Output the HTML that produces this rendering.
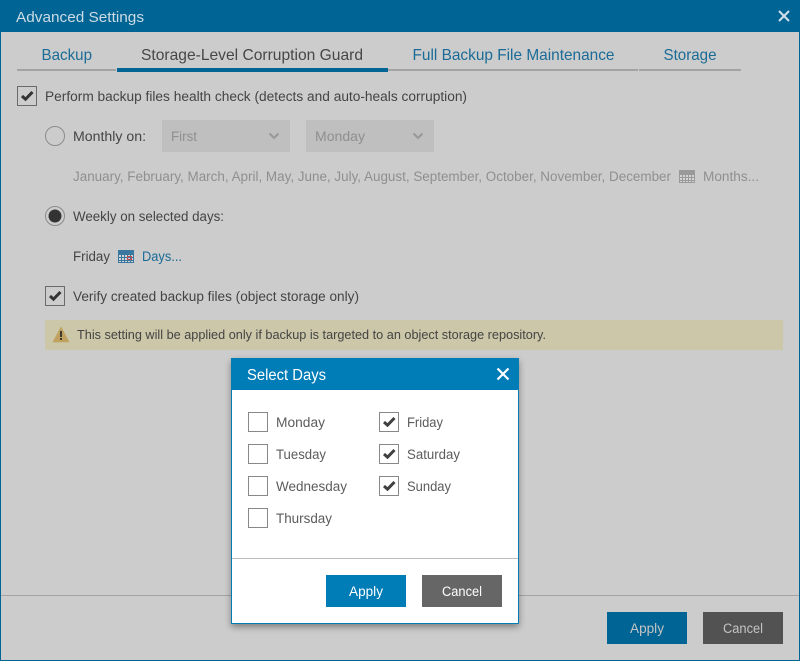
<!DOCTYPE html>
<html><head><meta charset="utf-8"><style>
html,body{margin:0;padding:0;width:800px;height:661px;overflow:hidden;background:#ccc}
svg{display:block;position:absolute;left:0;top:0}
text{font-family:"Liberation Sans",Arial,sans-serif;font-size:13.5px;fill:#444}
.tab{font-size:16px;fill:#1a6b97}
.dim{fill:#8f8f8f}
.d{fill:#5c5c5c}
.btn{fill:#fff;font-size:13.5px}
.btn2{fill:#c4c4c4;font-size:13.5px}
</style></head><body>
<svg width="800" height="661" viewBox="0 0 800 661" xmlns="http://www.w3.org/2000/svg">
<defs>
<filter id="sh" x="-10%" y="-10%" width="120%" height="120%"><feDropShadow dx="0" dy="3" stdDeviation="3.500" flood-color="#000" flood-opacity=".38"/></filter>
<g id="cal"><rect x="0" y="0" width="16" height="13" fill="currentColor"/><g fill="#d4d4d4"><rect x="1" y="5" width="2" height="2"/><rect x="4" y="5" width="2" height="2"/><rect x="7" y="5" width="2" height="2"/><rect x="10" y="5" width="2" height="2"/><rect x="13" y="5" width="2" height="2"/><rect x="1" y="8" width="2" height="2"/><rect x="4" y="8" width="2" height="2"/><rect x="7" y="8" width="2" height="2"/><rect x="10" y="8" width="2" height="2"/><rect x="13" y="8" width="2" height="2"/><rect x="1" y="11" width="2" height="1"/><rect x="4" y="11" width="2" height="1"/><rect x="7" y="11" width="2" height="1"/><rect x="10" y="11" width="2" height="1"/><rect x="13" y="11" width="2" height="1"/></g></g>
<path id="chk" d="M5 10 L8.500 13.200 L15.500 6" fill="none" stroke-width="3"/>
</defs>

<rect x="0" y="0" width="800" height="661" fill="#ccc"/>
<rect x="0" y="0" width="800" height="32" fill="#006595"/>
<rect x="0" y="0" width="1" height="661" fill="#006595"/>
<rect x="799" y="0" width="1" height="661" fill="#006595"/>
<rect x="0" y="660" width="800" height="1" fill="#006595"/>
<text x="16" y="22" style="font-size:15px;fill:#ccdbe4" textLength="128" lengthAdjust="spacingAndGlyphs">Advanced Settings</text>
<path d="M779 11 L789 21 M789 11 L779 21" stroke="#d4e0e8" stroke-width="2" fill="none"/>

<text class="tab" x="41.500" y="60" textLength="50.500" lengthAdjust="spacingAndGlyphs">Backup</text>
<text class="tab" x="141" y="60" textLength="222" lengthAdjust="spacingAndGlyphs" style="fill:#474747">Storage-Level Corruption Guard</text>
<text class="tab" x="412.500" y="60" textLength="202" lengthAdjust="spacingAndGlyphs">Full Backup File Maintenance</text>
<text class="tab" x="663.500" y="60" textLength="53" lengthAdjust="spacingAndGlyphs">Storage</text>
<rect x="17" y="69" width="99" height="2" fill="#a3a3a3"/>
<rect x="388" y="69" width="250" height="2" fill="#a3a3a3"/>
<rect x="639" y="69" width="102" height="2" fill="#a3a3a3"/>
<rect x="117" y="68" width="271" height="4" fill="#006595"/>

<rect x="17.500" y="86.500" width="19" height="19" fill="none" stroke="#6b6b6b"/>
<use href="#chk" x="17" y="86" stroke="#333"/>
<text x="45" y="101" textLength="422" lengthAdjust="spacingAndGlyphs">Perform backup files health check (detects and auto-heals corruption)</text>

<circle cx="55" cy="136" r="9.500" fill="none" stroke="#8c8c8c"/>
<text x="73" y="141" textLength="73" lengthAdjust="spacingAndGlyphs">Monthly on:</text>
<rect x="162" y="120" width="128" height="32" fill="#bfbfbf"/>
<rect x="306" y="120" width="128" height="32" fill="#bfbfbf"/>
<text class="dim" x="171" y="141" textLength="26" lengthAdjust="spacingAndGlyphs">First</text>
<text class="dim" x="315" y="141" textLength="50" lengthAdjust="spacingAndGlyphs">Monday</text>
<path d="M269.500 133.500 L274 138 L278.500 133.500 M413.500 133.500 L418 138 L422.500 133.500" fill="none" stroke="#999" stroke-width="2"/>
<text class="dim" x="73" y="181" textLength="598" lengthAdjust="spacingAndGlyphs">January, February, March, April, May, June, July, August, September, October, November, December</text>
<use href="#cal" x="679" y="170" color="#999"/>
<text class="dim" x="703" y="181" textLength="56" lengthAdjust="spacingAndGlyphs">Months...</text>

<circle cx="55" cy="216" r="9.500" fill="none" stroke="#8c8c8c"/>
<circle cx="55" cy="216" r="6.500" fill="#333"/>
<text x="73" y="221" textLength="151" lengthAdjust="spacingAndGlyphs">Weekly on selected days:</text>
<text x="73" y="261" textLength="37" lengthAdjust="spacingAndGlyphs">Friday</text>
<use href="#cal" x="118" y="250" color="#3b789f"/>
<rect x="127.500" y="256.500" width="4" height="3" fill="none" stroke="#c0484e"/>
<text x="142" y="261" textLength="40" lengthAdjust="spacingAndGlyphs" style="fill:#1a6b97">Days...</text>

<rect x="45.500" y="286.500" width="19" height="19" fill="none" stroke="#6b6b6b"/>
<use href="#chk" x="45" y="286" stroke="#333"/>
<text x="73" y="301" textLength="286" lengthAdjust="spacingAndGlyphs">Verify created backup files (object storage only)</text>

<rect x="45" y="320" width="738" height="30" fill="#cbc7a8"/>
<path d="M61 327 L69 342 L53 342 Z" fill="#c0a15f" stroke="#c0a15f" stroke-width=".6" stroke-linejoin="round"/>
<rect x="60" y="331" width="2" height="6" fill="#3d3a30"/>
<rect x="60" y="338" width="2" height="2" fill="#3d3a30"/>
<text x="77" y="339" textLength="469" lengthAdjust="spacingAndGlyphs" style="font-size:12.500px">This setting will be applied only if backup is targeted to an object storage repository.</text>

<rect x="1" y="595" width="798" height="1" fill="#a3a3a3"/>
<rect x="607" y="612" width="80" height="32" fill="#006595"/>
<rect x="703" y="612" width="80" height="32" fill="#525252"/>
<text class="btn2" x="630" y="633" textLength="34" lengthAdjust="spacingAndGlyphs">Apply</text>
<text class="btn2" x="723" y="633" textLength="40" lengthAdjust="spacingAndGlyphs">Cancel</text>

<rect x="231.500" y="358.500" width="287" height="265" fill="#fff" stroke="#007cb7" filter="url(#sh)"/>
<rect x="231" y="358" width="288" height="32" fill="#007cb7"/>
<text x="247" y="380" textLength="79" lengthAdjust="spacingAndGlyphs" style="font-size:15.500px;fill:#fff">Select Days</text>
<path d="M497.500 368.500 L508.500 379.500 M508.500 368.500 L497.500 379.500" stroke="#fff" stroke-width="2.200" fill="none"/>

<g fill="#fff" stroke="#888">
<rect x="248.500" y="412.500" width="19" height="19"/>
<rect x="248.500" y="444.500" width="19" height="19"/>
<rect x="248.500" y="476.500" width="19" height="19"/>
<rect x="248.500" y="508.500" width="19" height="19"/>
<rect x="379.500" y="412.500" width="19" height="19"/>
<rect x="379.500" y="444.500" width="19" height="19"/>
<rect x="379.500" y="476.500" width="19" height="19"/>
</g>
<use href="#chk" x="379" y="412" stroke="#404040"/>
<use href="#chk" x="379" y="444" stroke="#404040"/>
<use href="#chk" x="379" y="476" stroke="#404040"/>
<text class="d" x="276" y="427" textLength="49" lengthAdjust="spacingAndGlyphs">Monday</text>
<text class="d" x="276" y="459" textLength="50" lengthAdjust="spacingAndGlyphs">Tuesday</text>
<text class="d" x="276" y="491" textLength="71" lengthAdjust="spacingAndGlyphs">Wednesday</text>
<text class="d" x="276" y="523" textLength="56" lengthAdjust="spacingAndGlyphs">Thursday</text>
<text class="d" x="407" y="427" textLength="36" lengthAdjust="spacingAndGlyphs">Friday</text>
<text class="d" x="407" y="459" textLength="53" lengthAdjust="spacingAndGlyphs">Saturday</text>
<text class="d" x="407" y="491" textLength="44" lengthAdjust="spacingAndGlyphs">Sunday</text>

<rect x="232" y="558" width="286" height="1" fill="#bdbdbd"/>
<rect x="326" y="575" width="80" height="32" fill="#007cb7"/>
<rect x="422" y="575" width="80" height="32" fill="#666"/>
<text class="btn" x="349" y="596" textLength="34" lengthAdjust="spacingAndGlyphs">Apply</text>
<text class="btn" x="442" y="596" textLength="40" lengthAdjust="spacingAndGlyphs">Cancel</text>
</svg>
</body></html>
